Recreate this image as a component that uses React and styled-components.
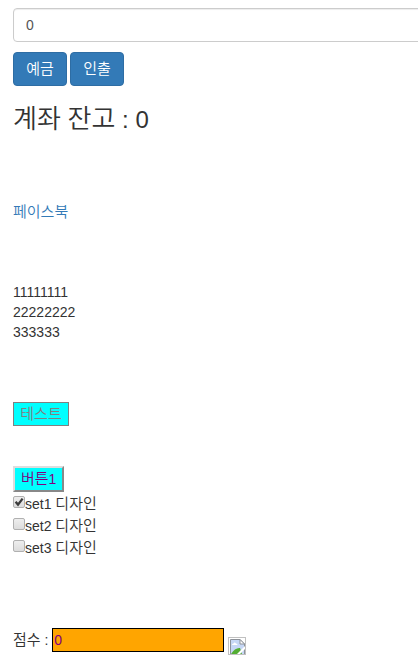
import React, { useState } from "react";
import styled, { createGlobalStyle } from "styled-components";

const latin = '"Liberation Sans", "Noto Sans CJK KR", sans-serif';

const GlobalStyle = createGlobalStyle`
  *, *::before, *::after { box-sizing: border-box; }
  html { overflow-x: hidden; }
  body {
    margin: 0;
    background: #fff;
    color: #333;
    font: 14px/20px ${latin};
  }
  button, input { font: inherit; }
`;

const Page = styled.main`
  display: flex;
  flex-direction: column;
  align-items: flex-start;
  padding: 8px 0 8px 13px;
  overflow: hidden;
`;

const Hangul = styled.span`
  font-family: "Noto Sans CJK KR DemiLight", "Noto Sans CJK KR", sans-serif;
  font-size: ${({ $large }) => ($large ? 26 : 15)}px;
  font-weight: 350;
  line-height: 1;
`;

const AmountInput = styled.input`
  align-self: stretch;
  height: 34px;
  margin-right: -8px;
  padding: 6px 12px;
  border: 1px solid #ccc;
  border-radius: 4px;
  color: #555;
  background: #fff;
  box-shadow: inset 0 1px 1px rgba(0, 0, 0, 0.075);
`;

const ButtonRow = styled.div`
  display: flex;
  gap: 3px;
  margin-top: 10px;
`;

const PrimaryButton = styled.button`
  min-width: 54px;
  height: 34px;
  padding: 0 12px;
  border: 1px solid #2e6da4;
  border-radius: 4px;
  color: #fff;
  background: #337ab7;
`;

const Balance = styled.h3`
  height: 26px;
  margin: 18px 0 0;
  font-size: 24px;
  font-weight: 400;
  line-height: 26px;
  white-space: nowrap;
`;

const TextLink = styled.a`
  height: 20px;
  margin-top: 72px;
  color: #337ab7;
  text-decoration: none;
`;

const NumberList = styled.div`
  margin-top: 60px;
`;

const NumberLine = styled.div`
  line-height: 20px;
`;

const TestButton = styled.button`
  min-width: 56px;
  height: 24px;
  margin-top: 60px;
  padding: 0 6px;
  border: 1px solid #808080;
  color: #808080;
  background: #0ff;
`;

const RaisedButton = styled.button`
  height: 26px;
  margin-top: 40px;
  padding: 0 6px;
  border: 2px solid;
  border-color: #ddd #888 #888 #ddd;
  color: #800080;
  background: #0ff;
  line-height: 20px;
`;

const Options = styled.div`
  display: flex;
  flex-direction: column;
  margin-top: 1px;
`;

const Option = styled.label`
  display: flex;
  align-items: center;
  height: 22px;
  white-space: pre;
`;

const Tick = styled.span`
  display: grid;
  width: 12px;
  height: 12px;
  margin-bottom: 4px;

  & > * { grid-area: 1 / 1; }
  input:not(:checked) + svg { visibility: hidden; }
`;

const CheckInput = styled.input`
  appearance: none;
  width: 12px;
  height: 12px;
  margin: 0;
  border: 1px solid #b0b0b0;
  border-radius: 2px;
  background: linear-gradient(#eee, #dcdcdc);
`;

const CheckMark = styled.svg`
  width: 12px;
  height: 12px;
  pointer-events: none;
`;

const ScoreRow = styled.div`
  display: flex;
  align-items: center;
  margin-top: 69px;
`;

const ScoreLabel = styled.label`
  white-space: pre;
`;

const ScoreInput = styled.input`
  width: 172px;
  height: 24px;
  padding: 1px;
  border: 1px solid #000;
  border-radius: 0;
  color: #800080;
  background: #ffa500;
`;

const MissingImage = styled.svg`
  align-self: flex-end;
  width: 18px;
  height: 18px;
  margin: 0 0 -3px 4px;
`;

const lines = ["11111111", "22222222", "333333"];

function CheckOption({ name, defaultChecked }) {
  return (
    <Option>
      <Tick>
        <CheckInput type="checkbox" name={name} defaultChecked={defaultChecked} />
        <CheckMark viewBox="0 0 12 12" aria-hidden="true">
          <path d="M2.6 5.8 L5 8.6 L9.6 2.6" fill="none" stroke="#3c3c3c" strokeWidth="2.3" />
        </CheckMark>
      </Tick>
      <span>{name} <Hangul>디자인</Hangul></span>
    </Option>
  );
}

export default function App() {
  const [amount, setAmount] = useState("0");
  const [balance, setBalance] = useState(0);
  const [score, setScore] = useState("0");
  const value = Number(amount) || 0;

  return (
    <>
      <GlobalStyle />
      <Page>
        <AmountInput aria-label="금액" value={amount} onChange={(e) => setAmount(e.target.value)} />
        <ButtonRow>
          <PrimaryButton type="button" onClick={() => setBalance(balance + value)}>
            <Hangul>예금</Hangul>
          </PrimaryButton>
          <PrimaryButton type="button" onClick={() => setBalance(balance - value)}>
            <Hangul>인출</Hangul>
          </PrimaryButton>
        </ButtonRow>
        <Balance>
          <Hangul $large>계좌</Hangul> <Hangul $large>잔고</Hangul> : {balance}
        </Balance>
        <TextLink href="#facebook"><Hangul>페이스북</Hangul></TextLink>
        <NumberList>
          {lines.map((line) => <NumberLine key={line}>{line}</NumberLine>)}
        </NumberList>
        <TestButton type="button" disabled><Hangul>테스트</Hangul></TestButton>
        <RaisedButton type="button"><Hangul>버튼</Hangul>1</RaisedButton>
        <Options>
          <CheckOption name="set1" defaultChecked />
          <CheckOption name="set2" />
          <CheckOption name="set3" />
        </Options>
        <ScoreRow>
          <ScoreLabel htmlFor="score"><Hangul>점수</Hangul> : </ScoreLabel>
          <ScoreInput id="score" value={score} onChange={(e) => setScore(e.target.value)} />
          <MissingImage viewBox="0 0 18 18" aria-hidden="true">
            <rect x="0.5" y="0.5" width="17" height="17" fill="#fff" stroke="#c0c0c0" />
            <path d="M2.5 17 V2.5 H12 L16.5 7 V17" fill="#c6d7f5" stroke="#8d9299" />
            <path d="M12 2.5 V7 H16.5 Z" fill="#fff" stroke="#8d9299" />
            <path d="M4 8 Q4 6.4 5.6 6.5 Q6.5 4.6 8 6.4 Q9.6 6.5 9.5 8 Z" fill="#fff" />
            <path d="M3 17 Q7 10.5 12 11 L14 17 Z" fill="#53ad32" />
            <path d="M9 17 L17 9 V12 L12 17 Z" fill="#fff" />
          </MissingImage>
        </ScoreRow>
      </Page>
    </>
  );
}
